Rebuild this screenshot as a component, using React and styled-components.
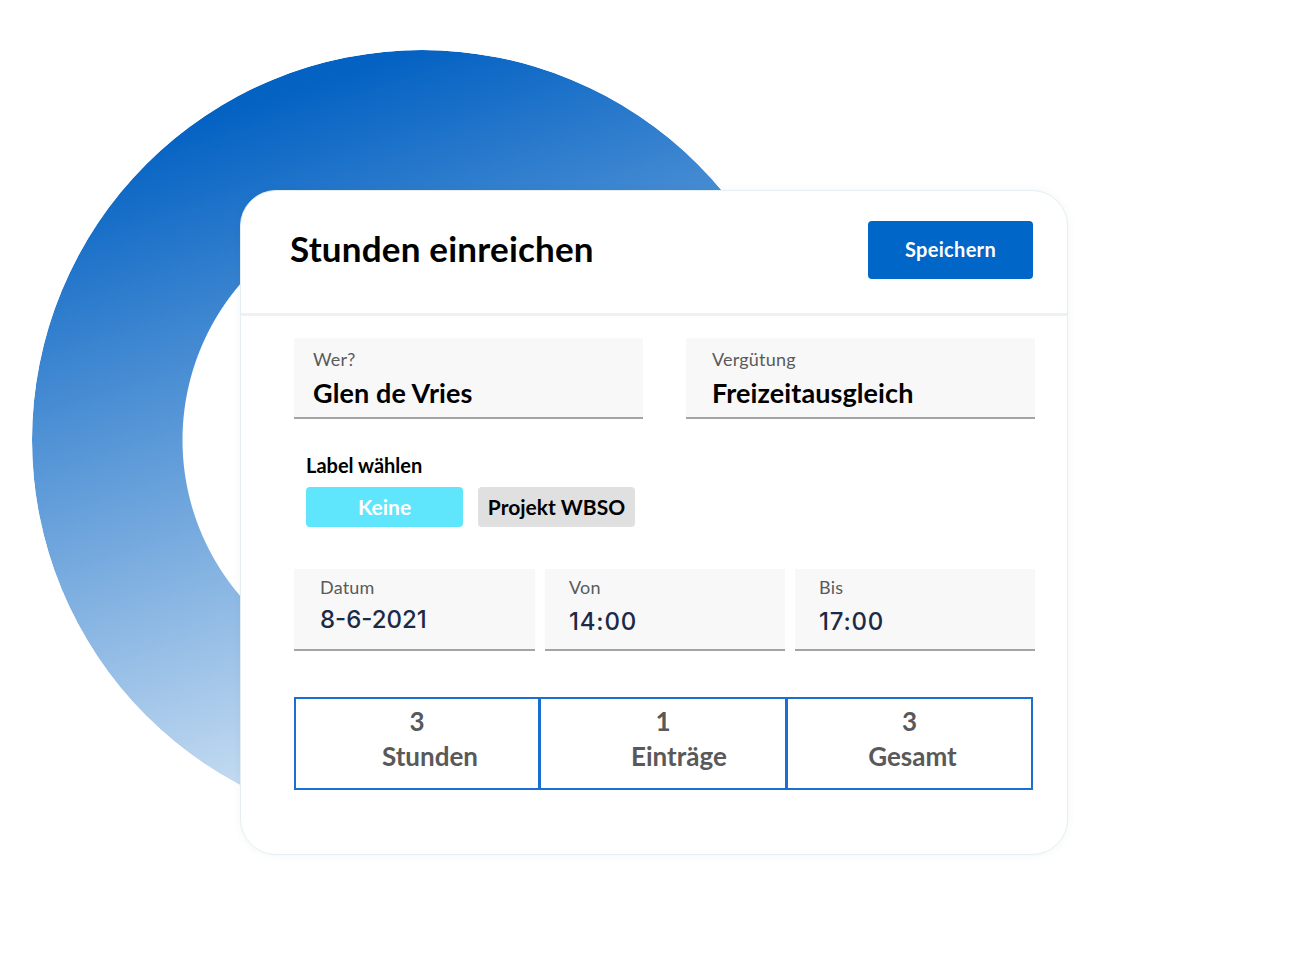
import styled, { createGlobalStyle } from "styled-components";

const GlobalStyle = createGlobalStyle`
  html, body {
    margin: 0;
    padding: 0;
    background: #ffffff;
  }
  body {
    font-family: "Lato", "Noto Sans", sans-serif;
  }
`;

const Page = styled.div`
  position: relative;
  width: 1308px;
  height: 974px;
  overflow: hidden;
  padding: 190px 0 0 240px;
  box-sizing: border-box;
`;

const Ring = styled.div`
  position: absolute;
  left: 32px;
  top: 50px;
  width: 780px;
  height: 780px;
  border-radius: 50%;
  background: linear-gradient(162deg, #0462c3 12%, #c4dbf1 78%, #e2eef9 100%);
  -webkit-mask: radial-gradient(circle at center, transparent 239px, #000 240px);
  mask: radial-gradient(circle at center, transparent 239px, #000 240px);
  z-index: 0;
`;

const Card = styled.div`
  position: relative;
  z-index: 1;
  width: 828px;
  height: 665px;
  box-sizing: border-box;
  background: #ffffff;
  border: 1px solid #e7eef2;
  border-radius: 36px;
  box-shadow: 0 0 8px rgba(40, 80, 110, 0.06);
  display: flex;
  flex-direction: column;
`;

const Header = styled.div`
  display: flex;
  justify-content: space-between;
  align-items: flex-start;
  padding: 30px 34px 34px 49px;
  border-bottom: 3px solid #eef1f3;
`;

const Title = styled.h1`
  margin: 6px 0 0;
  font-family: "Lato", sans-serif;
  font-weight: 700;
  font-size: 35px;
  letter-spacing: 0.2px;
  color: #000000;
`;

const SaveButton = styled.button`
  width: 165px;
  height: 58px;
  border: none;
  border-radius: 4px;
  background: #0066c8;
  color: #ffffff;
  font-family: "Lato", sans-serif;
  font-weight: 700;
  font-size: 20px;
  letter-spacing: 0.3px;
  padding-bottom: 4px;
`;

const Body = styled.div`
  display: flex;
  flex-direction: column;
  padding: 22px 34px 0 53px;
`;

const Grid = styled.div`
  display: grid;
  grid-template-columns: ${(p) => p.cols};
  column-gap: ${(p) => p.gap}px;
  margin-top: ${(p) => p.top || 0}px;
`;

const Field = styled.div`
  height: ${(p) => p.h || 81}px;
  box-sizing: border-box;
  background: #f8f8f8;
  border-bottom: 2px solid #a4a4a4;
  padding: ${(p) => p.pad};
  display: flex;
  flex-direction: column;
`;

const FieldLabel = styled.div`
  font-family: "Lato", sans-serif;
  font-size: 18px;
  color: #5a5a5a;
  line-height: 22px;
  letter-spacing: 0.2px;
`;

const FieldValue = styled.div`
  font-family: "Lato", sans-serif;
  font-weight: 700;
  font-size: 27px;
  color: #000000;
  line-height: 32px;
  margin-top: 7px;
  letter-spacing: 0.1px;
`;

const TimeValue = styled.div`
  font-family: "Inter", "Roboto", sans-serif;
  font-weight: 500;
  font-size: 24px;
  color: #1c2a48;
  line-height: 30px;
  margin-top: ${(p) => p.top}px;
  letter-spacing: ${(p) => p.spacing || 0}px;
`;

const LabelSection = styled.div`
  padding-left: 12px;
  margin-top: 34px;
  display: flex;
  flex-direction: column;
`;

const SectionTitle = styled.div`
  font-family: "Lato", sans-serif;
  font-weight: 700;
  font-size: 20px;
  color: #000000;
  line-height: 24px;
`;

const Chips = styled.div`
  display: flex;
  gap: 15px;
  margin-top: 10px;
`;

const Chip = styled.div`
  width: 157px;
  height: 40px;
  box-sizing: border-box;
  border-radius: 4px;
  display: flex;
  align-items: center;
  justify-content: center;
  padding-bottom: 2px;
  font-family: "Lato", sans-serif;
  font-weight: 700;
  font-size: 21px;
  background: ${(p) => (p.active ? "#5fe6fd" : "#e0e0e0")};
  color: ${(p) => (p.active ? "#ffffff" : "#000000")};
`;

const Stats = styled.div`
  display: grid;
  grid-template-columns: 246px 247px 246px;
  margin-top: 46px;
`;

const Stat = styled.div`
  height: 93px;
  box-sizing: border-box;
  border: 2px solid #1b6fd1;
  margin-left: ${(p) => (p.first ? 0 : -1)}px;
  display: flex;
  flex-direction: column;
  align-items: center;
  padding-top: 7px;
  font-family: "Lato", sans-serif;
  font-weight: 700;
  color: #595959;
`;

const StatNumber = styled.div`
  font-size: 26px;
  line-height: 30px;
`;

const StatLabel = styled.div`
  font-size: 26px;
  line-height: 30px;
  margin-top: 5px;
  padding-left: ${(p) => p.shift}px;
`;

const stats = [
  { n: "3", label: "Stunden", shift: 26 },
  { n: "1", label: "Einträge", shift: 32 },
  { n: "3", label: "Gesamt", shift: 6 },
];

export default function App() {
  return (
    <>
      <GlobalStyle />
      <Page>
        <Ring />
        <Card>
          <Header>
            <Title>Stunden einreichen</Title>
            <SaveButton>Speichern</SaveButton>
          </Header>
          <Body>
            <Grid cols="349px 349px" gap={43}>
              <Field pad="10px 19px">
                <FieldLabel>Wer?</FieldLabel>
                <FieldValue>Glen de Vries</FieldValue>
              </Field>
              <Field pad="10px 26px">
                <FieldLabel>Vergütung</FieldLabel>
                <FieldValue>Freizeitausgleich</FieldValue>
              </Field>
            </Grid>

            <LabelSection>
              <SectionTitle>Label wählen</SectionTitle>
              <Chips>
                <Chip active>Keine</Chip>
                <Chip>Projekt WBSO</Chip>
              </Chips>
            </LabelSection>

            <Grid cols="241px 240px 240px" gap={10} top={42}>
              <Field pad="7px 26px" h={82}>
                <FieldLabel>Datum</FieldLabel>
                <TimeValue top={7}>8-6-2021</TimeValue>
              </Field>
              <Field pad="7px 24px" h={82}>
                <FieldLabel>Von</FieldLabel>
                <TimeValue top={9} spacing={0.8}>14:00</TimeValue>
              </Field>
              <Field pad="7px 24px" h={82}>
                <FieldLabel>Bis</FieldLabel>
                <TimeValue top={9} spacing={0.8}>17:00</TimeValue>
              </Field>
            </Grid>

            <Stats>
              {stats.map((s, i) => (
                <Stat key={s.label} first={i === 0}>
                  <StatNumber>{s.n}</StatNumber>
                  <StatLabel shift={s.shift}>{s.label}</StatLabel>
                </Stat>
              ))}
            </Stats>
          </Body>
        </Card>
      </Page>
    </>
  );
}
